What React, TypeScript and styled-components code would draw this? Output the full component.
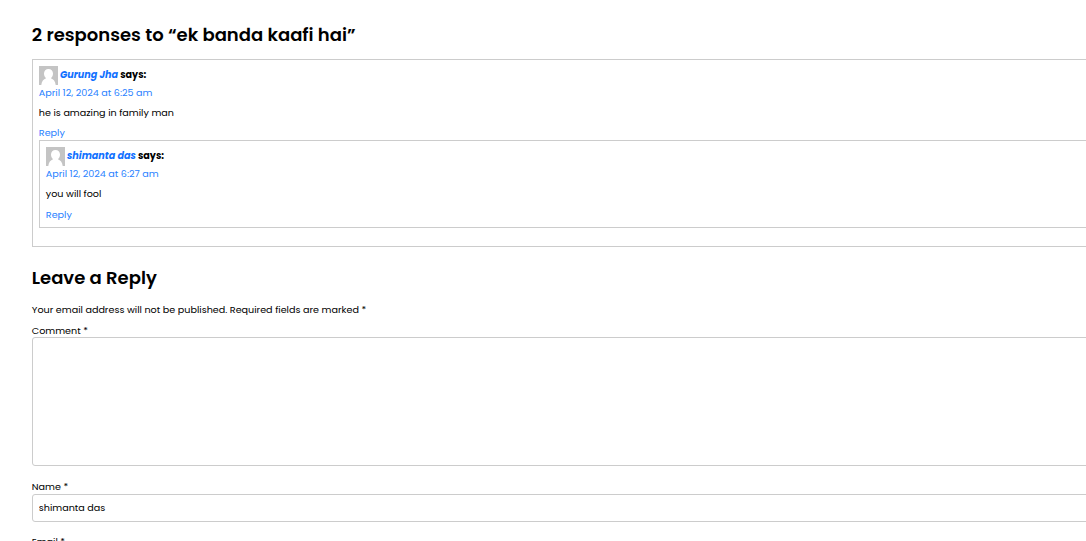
import React, { useState } from 'react';
import styled, { createGlobalStyle } from 'styled-components';

const GlobalStyle = createGlobalStyle`
  * {
    box-sizing: border-box;
  }
  body {
    margin: 0;
    background: #fff;
    color: #000;
    font-family: Poppins, Inter, 'Open Sans', sans-serif;
    font-size: 9.6px;
    overflow: hidden;
  }
`;

const Page = styled.main`
  width: 1140px;
  height: 541px;
  padding: 20px 0 0 31.8px;
  overflow: hidden;
`;

const Title = styled.h2`
  margin: 0;
  font-size: 18px;
  font-weight: 600;
  line-height: 30px;
  white-space: nowrap;
`;

const CommentBox = styled.article<{ $nested?: boolean }>`
  height: ${props => (props.$nested ? 88 : 188)}px;
  margin-top: ${props => (props.$nested ? 0 : 9)}px;
  padding: 6px;
  border: 1px solid #ccc;
`;

const Author = styled.div`
  display: flex;
  height: 19px;
  gap: 2.2px;
  line-height: 17px;
  font-weight: 700;
`;

const AuthorLink = styled.a`
  color: #1271ff;
  font-style: italic;
`;

const Avatar = styled.svg`
  display: block;
  width: 19px;
  height: 19px;
`;

const DateLink = styled.a`
  display: block;
  height: 16px;
  line-height: 16px;
  color: #2a82ff;
`;

const Message = styled.p`
  margin: 4px 0;
  line-height: 16px;
`;

const ReplyLink = styled.a<{ $nested?: boolean }>`
  display: block;
  height: 15px;
  padding-top: ${props => (props.$nested ? 1 : 0)}px;
  line-height: 16px;
  color: #2a82ff;
`;

const ReplyForm = styled.form`
  margin-top: 16px;
`;

const Note = styled.p`
  margin: 9px 0 5px;
  line-height: 16px;
`;

const Label = styled.label`
  display: block;
  height: 14px;
  line-height: 16px;
`;

const CommentInput = styled.textarea`
  display: block;
  width: 100%;
  height: 129px;
  margin-bottom: 13px;
  padding: 6px;
  border: 1px solid #ccc;
  border-radius: 3px;
  font: inherit;
  resize: none;
`;

const NameInput = styled.input`
  display: block;
  width: 100%;
  height: 28px;
  margin: 1px 0 12px;
  padding: 0 6px;
  border: 1px solid #ccc;
  border-radius: 3px;
  color: #000;
  font: inherit;
  outline: none;
`;

const DefaultAvatar = () => (
  <Avatar viewBox='0 0 19 19'>
    <path fill='#c4c4c4' d='M0 0h19v19H0z' />
    <path
      fill='#fff'
      d='M9.5 3C6.8 3 5 4.900 5 7.500c0 2 .8 3.700 2.100 4.700C4.500 13 2.700 15.400 2.300 19h14.400c-.4-3.600-2.200-6-4.800-6.800C13.200 11.200 14 9.500 14 7.500 14 4.900 12.200 3 9.500 3z'
    />
  </Avatar>
);

interface CommentProps {
  author: string;
  date: string;
  message: string;
  nested?: boolean;
  children?: React.ReactNode;
}

const Comment = ({ author, date, message, nested, children }: CommentProps) => (
  <CommentBox $nested={nested}>
    <Author>
      <DefaultAvatar />
      <AuthorLink>{author}</AuthorLink>
      <span>says:</span>
    </Author>
    <DateLink>{date}</DateLink>
    <Message>{message}</Message>
    <ReplyLink $nested={nested}>Reply</ReplyLink>
    {children}
  </CommentBox>
);

const App = () => {
  const [comment, setComment] = useState('');
  const [name, setName] = useState('shimanta das');

  return (
    <Page>
      <GlobalStyle />
      <Title>2 responses to “ek banda kaafi hai”</Title>
      <Comment
        author='Gurung Jha'
        date='April 12, 2024 at 6:25 am'
        message='he is amazing in family man'
      >
        <Comment
          nested
          author='shimanta das'
          date='April 12, 2024 at 6:27 am'
          message='you will fool'
        />
      </Comment>
      <ReplyForm>
        <Title>Leave a Reply</Title>
        <Note>
          Your email address will not be published. Required fields are marked *
        </Note>
        <Label htmlFor='comment'>Comment *</Label>
        <CommentInput
          id='comment'
          value={comment}
          onChange={e => setComment(e.target.value)}
        />
        <Label htmlFor='author'>Name *</Label>
        <NameInput
          id='author'
          value={name}
          onChange={e => setName(e.target.value)}
        />
        <Label>Email *</Label>
      </ReplyForm>
    </Page>
  );
};

export default App;
